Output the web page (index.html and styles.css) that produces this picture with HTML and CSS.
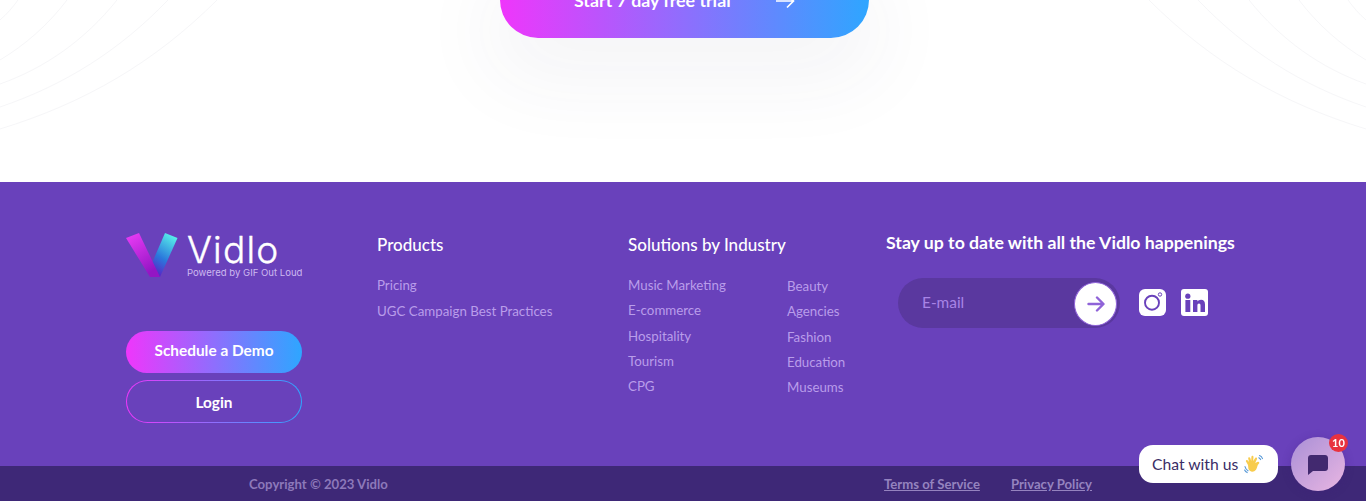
FILE: index.html

```html
<!DOCTYPE html>
<html lang="en">
<head>
  <meta charset="UTF-8" />
  <meta name="viewport" content="width=device-width, initial-scale=1.0" />
  <title>Vidlo</title>
  <link rel="stylesheet" href="styles.css">
</head>
<body>
  <section class="cta">
    <svg class="cta-lines" width="1366" height="182" viewBox="0 0 1366 182" fill="none">
      <path d="M0 129C85 103 155 62 217 0M0 107C65 85 120 50 168 0M0 84C45 68 85 40 117 0M0 60C25 45 48 25 67 0M0 20C7 14 13 7 18 0" />
      <path d="M1366 129C1281 103 1211 62 1149 0M1366 107C1301 85 1246 50 1198 0M1366 84C1321 68 1281 40 1249 0M1366 60C1341 45 1318 25 1299 0M1366 20C1359 14 1353 7 1348 0" />
    </svg>
    <a class="cta-btn" href="#">
      <span>Start 7 day free trial</span>
      <svg width="20" height="18" viewBox="0 0 20 18" fill="none" stroke="#fff" stroke-width="1.7"><path d="M1 9H18.5M12 2.5L18.5 9L12 15.5" /></svg>
    </a>
  </section>

  <footer>
    <div class="footer-main">
      <div class="col-brand">
        <div class="logo">
          <svg width="52" height="45" viewBox="0 0 52 45">
            <defs>
              <linearGradient id="logoLeft" x1="0" y1="0" x2="0.5" y2="1">
                <stop offset="0" stop-color="#ee3ef8" />
                <stop offset="1" stop-color="#9415c4" />
              </linearGradient>
              <linearGradient id="logoRight" x1="0.7" y1="0" x2="0.3" y2="1">
                <stop offset="0" stop-color="#58f0ea" />
                <stop offset="0.6" stop-color="#2a78dc" />
                <stop offset="1" stop-color="#5a22c6" />
              </linearGradient>
            </defs>
            <path d="M39 0L51.5 5L34 44L33 44L26 30Z" fill="url(#logoRight)" />
            <path d="M0 5L13 0L34 44H24Z" fill="url(#logoLeft)" />
          </svg>
          <div class="logo-text">
            <span class="logo-name">Vidlo</span>
            <span class="logo-tag">Powered by GIF Out Loud</span>
          </div>
        </div>
        <a class="btn btn-fill" href="#">Schedule a Demo</a>
        <a class="btn btn-line" href="#">Login</a>
      </div>

      <div class="col-products">
        <h4>Products</h4>
        <ul>
          <li><a href="#">Pricing</a></li>
          <li><a href="#">UGC Campaign Best Practices</a></li>
        </ul>
      </div>

      <div class="col-industry">
        <h4>Solutions by Industry</h4>
        <div class="industry-lists">
          <ul>
            <li><a href="#">Music Marketing</a></li>
            <li><a href="#">E-commerce</a></li>
            <li><a href="#">Hospitality</a></li>
            <li><a href="#">Tourism</a></li>
            <li><a href="#">CPG</a></li>
          </ul>
          <ul class="list-second">
            <li><a href="#">Beauty</a></li>
            <li><a href="#">Agencies</a></li>
            <li><a href="#">Fashion</a></li>
            <li><a href="#">Education</a></li>
            <li><a href="#">Museums</a></li>
          </ul>
        </div>
      </div>

      <div class="col-news">
        <h4>Stay up to date with all the Vidlo happenings</h4>
        <div class="news-row">
          <form class="email-form">
            <input type="text" placeholder="E-mail">
            <button type="button" aria-label="Subscribe">
              <svg width="18" height="16" viewBox="0 0 18 16" fill="none" stroke="#8f63d8" stroke-width="2.4" stroke-linecap="round" stroke-linejoin="round"><path d="M1.5 8H16M10 1.5L16.5 8L10 14.5" /></svg>
            </button>
          </form>
          <a class="social" href="#" aria-label="Instagram">
            <svg width="27" height="27" viewBox="0 0 27 27">
              <rect width="27" height="27" rx="6" fill="#fff" />
              <circle cx="13" cy="13.7" r="7" fill="none" stroke="#6941bb" stroke-width="1.9" />
              <circle cx="21" cy="5.5" r="1.7" fill="none" stroke="#6941bb" stroke-width="1" />
            </svg>
          </a>
          <a class="social" href="#" aria-label="LinkedIn">
            <svg width="27" height="27" viewBox="0 0 27 27">
              <rect width="27" height="27" rx="3" fill="#fff" />
              <circle cx="6.8" cy="7.2" r="2.6" fill="#6941bb" />
              <rect x="4.4" y="11" width="4.9" height="12" fill="#6941bb" />
              <path d="M12 11H16.4V12.6C17.2 11.4 18.5 10.7 20 10.7C22.8 10.7 24 12.6 24 15.6V23H19.5V16.6C19.5 15.2 19 14.4 18 14.4C16.9 14.4 16.4 15.3 16.4 16.7V23H12Z" fill="#6941bb" />
            </svg>
          </a>
        </div>
      </div>
    </div>

    <div class="footer-bottom">
      <span>Copyright © 2023 Vidlo</span>
      <div class="legal">
        <a href="#">Terms of Service</a>
        <a href="#">Privacy Policy</a>
      </div>
    </div>
  </footer>

  <div class="chat">
    <div class="chat-label">
      Chat with us
      <svg width="20" height="20" viewBox="0 0 20 20" fill="none">
        <path d="M4 11L2 7.5C1.4 6.2 3.2 5.4 3.9 6.6L5 8L4.2 4.4C4 3 5.9 2.7 6.3 4.1L7.2 7L7.4 2.8C7.5 1.4 9.5 1.5 9.5 3L9.2 7L11.2 4C12 3 13.6 3.9 13 5.1L11.2 9L13.8 7.8C15.2 7.4 15.9 9 14.8 9.8C13 11 13.6 13.6 12 15.8C9.8 18.7 5.4 18 4.4 14.8Z" fill="#f8cc4c" />
        <path d="M15.5 1.5C17 2.1 18 3.2 18.5 4.6M14.8 3.8C15.6 4.2 16.2 4.8 16.6 5.6M1 12.6C1.4 14.4 2.4 15.8 4 16.8M.6 16C1.2 17.2 2 18 3.2 18.6" stroke="#5b9bd8" stroke-width="1.1" stroke-linecap="round" />
      </svg>
    </div>
    <div class="chat-btn">
      <svg width="20" height="20" viewBox="0 0 20 20"><path d="M3 0H17C18.7 0 20 1.3 20 3V13C20 14.7 18.7 16 17 16H5L0 20V3C0 1.3 1.3 0 3 0Z" fill="#42296f" /></svg>
      <span class="chat-badge">10</span>
    </div>
  </div>
</body>
</html>
```

FILE: styles.css

```css
* {
  box-sizing: border-box;
}
html, body {
  height: 501px;
  overflow: hidden;
}
body {
  margin: 0;
  font-family: "Lato", "Noto Sans", sans-serif;
  background: #fff;
}
a {
  text-decoration: none;
  color: inherit;
}
ul {
  margin: 0;
  padding: 0;
  list-style: none;
}

/* top call to action */
.cta {
  position: relative;
  height: 182px;
  display: flex;
  justify-content: center;
  align-items: flex-start;
}
.cta-lines {
  position: absolute;
  top: 0;
  left: 0;
}
.cta-lines path {
  stroke: #f6f6f8;
  stroke-width: 1;
}
.cta-btn {
  position: relative;
  width: 369px;
  height: 76px;
  margin-top: -38px;
  margin-left: 3px;
  padding-left: 74px;
  display: flex;
  align-items: center;
  border-radius: 38px;
  background: linear-gradient(90deg, #ef36fb, #2ea6ff);
  box-shadow: 0 30px 80px 15px rgba(60, 60, 100, 0.05);
  color: #fff;
  font-size: 17.8px;
  font-weight: 700;
}
.cta-btn svg {
  margin: 2px 0 0 44px;
}

/* footer */
footer {
  height: 319px;
  background: #6941bb;
  color: #fff;
}
.footer-main {
  height: 284px;
  padding: 52px 0 0 126px;
  display: grid;
  grid-template-columns: 251px 251px 258px auto;
}
h4 {
  margin: 0;
  font-size: 17px;
  line-height: 22px;
  font-weight: 700;
}
.col-products h4, .col-industry h4 {
  font-weight: 500;
}

.col-brand {
  margin-top: -1px;
}
.logo {
  display: flex;
  gap: 9px;
  height: 48px;
}
.logo-text {
  display: flex;
  flex-direction: column;
}
.logo-name {
  font-family: "Inter", sans-serif;
  font-size: 37px;
  font-weight: 300;
  letter-spacing: 1.2px;
  line-height: 30px;
  margin-top: 2px;
  -webkit-text-stroke: 0.4px #fff;
}
.logo-tag {
  font-family: "Inter", sans-serif;
  font-size: 9.55px;
  line-height: 11px;
  margin-top: 2px;
  color: #cdb9f0;
  white-space: nowrap;
}
.btn {
  display: flex;
  align-items: center;
  justify-content: center;
  width: 176px;
  font-size: 15.4px;
  font-weight: 700;
  border-radius: 22px;
}
.btn-fill {
  height: 42px;
  margin-top: 50px;
  padding-bottom: 5px;
  background: linear-gradient(90deg, #ef36fb, #2ea6ff);
}
.btn-line {
  height: 43px;
  margin-top: 7px;
  padding-top: 1px;
  border: 1px solid transparent;
  background: linear-gradient(#6941bb, #6941bb) padding-box, linear-gradient(90deg, #ef36fb, #2ea6ff) border-box;
}

.col-products ul, .col-industry ul {
  margin-top: 17px;
  font-size: 13.3px;
  color: #b99dea;
}
.col-products li, .col-industry li {
  height: 25.3px;
  line-height: 25px;
}
.col-products li {
  height: 26px;
}
.industry-lists {
  display: grid;
  grid-template-columns: 159px auto;
}
.list-second {
  padding-top: 1px;
}

.col-news h4 {
  margin-top: -2px;
  font-size: 17.7px;
}
.news-row {
  display: flex;
  align-items: center;
  margin: 24px 0 0 12px;
}
.email-form {
  position: relative;
  width: 222px;
  height: 50px;
  border-radius: 25px;
  background: #5a389f;
}
.email-form input {
  width: 170px;
  height: 48px;
  padding: 0 0 0 24px;
  border: none;
  outline: none;
  background: transparent;
  font: inherit;
  font-size: 15.4px;
  color: #fff;
}
.email-form input::placeholder {
  color: #a884e6;
  opacity: 1;
}
.email-form button {
  position: absolute;
  top: 4px;
  right: 3px;
  width: 43px;
  height: 44px;
  padding: 0;
  display: flex;
  align-items: center;
  justify-content: center;
  border: 1px solid #8f63d8;
  border-radius: 50%;
  background: #fff;
}
.social {
  display: flex;
  margin-left: 15px;
  margin-top: -1px;
}
.email-form + .social {
  margin-left: 19px;
}

.footer-bottom {
  height: 35px;
  padding: 1px 274px 0 249px;
  display: flex;
  align-items: center;
  justify-content: space-between;
  background: #3e2877;
  color: #8d79ba;
  font-size: 13.15px;
  font-weight: 700;
}
.legal {
  display: flex;
  gap: 31px;
}
.legal a {
  color: #9583bf;
  text-decoration: underline;
}

/* chat widget */
.chat {
  position: fixed;
  right: 21px;
  bottom: 10px;
  display: flex;
  align-items: center;
  gap: 13px;
}
.chat-label {
  display: flex;
  align-items: center;
  gap: 6px;
  width: 139px;
  height: 38px;
  padding-left: 13px;
  border-radius: 14px;
  background: #fff;
  color: #3a2d66;
  font-size: 15.7px;
  white-space: nowrap;
}
.chat-btn {
  position: relative;
  width: 54px;
  height: 54px;
  display: flex;
  align-items: center;
  justify-content: center;
  border-radius: 50%;
  background: linear-gradient(135deg, #a98fd6, #e9b6e2);
  box-shadow: 0 2px 10px rgba(60, 30, 120, 0.3);
}
.chat-btn svg {
  margin-top: 2px;
}
.chat-badge {
  position: absolute;
  top: -3px;
  right: -3px;
  width: 19px;
  height: 18px;
  border-radius: 50%;
  background: #e8323f;
  color: #fff;
  font-size: 11px;
  font-weight: 700;
  line-height: 18px;
  text-align: center;
}
```
